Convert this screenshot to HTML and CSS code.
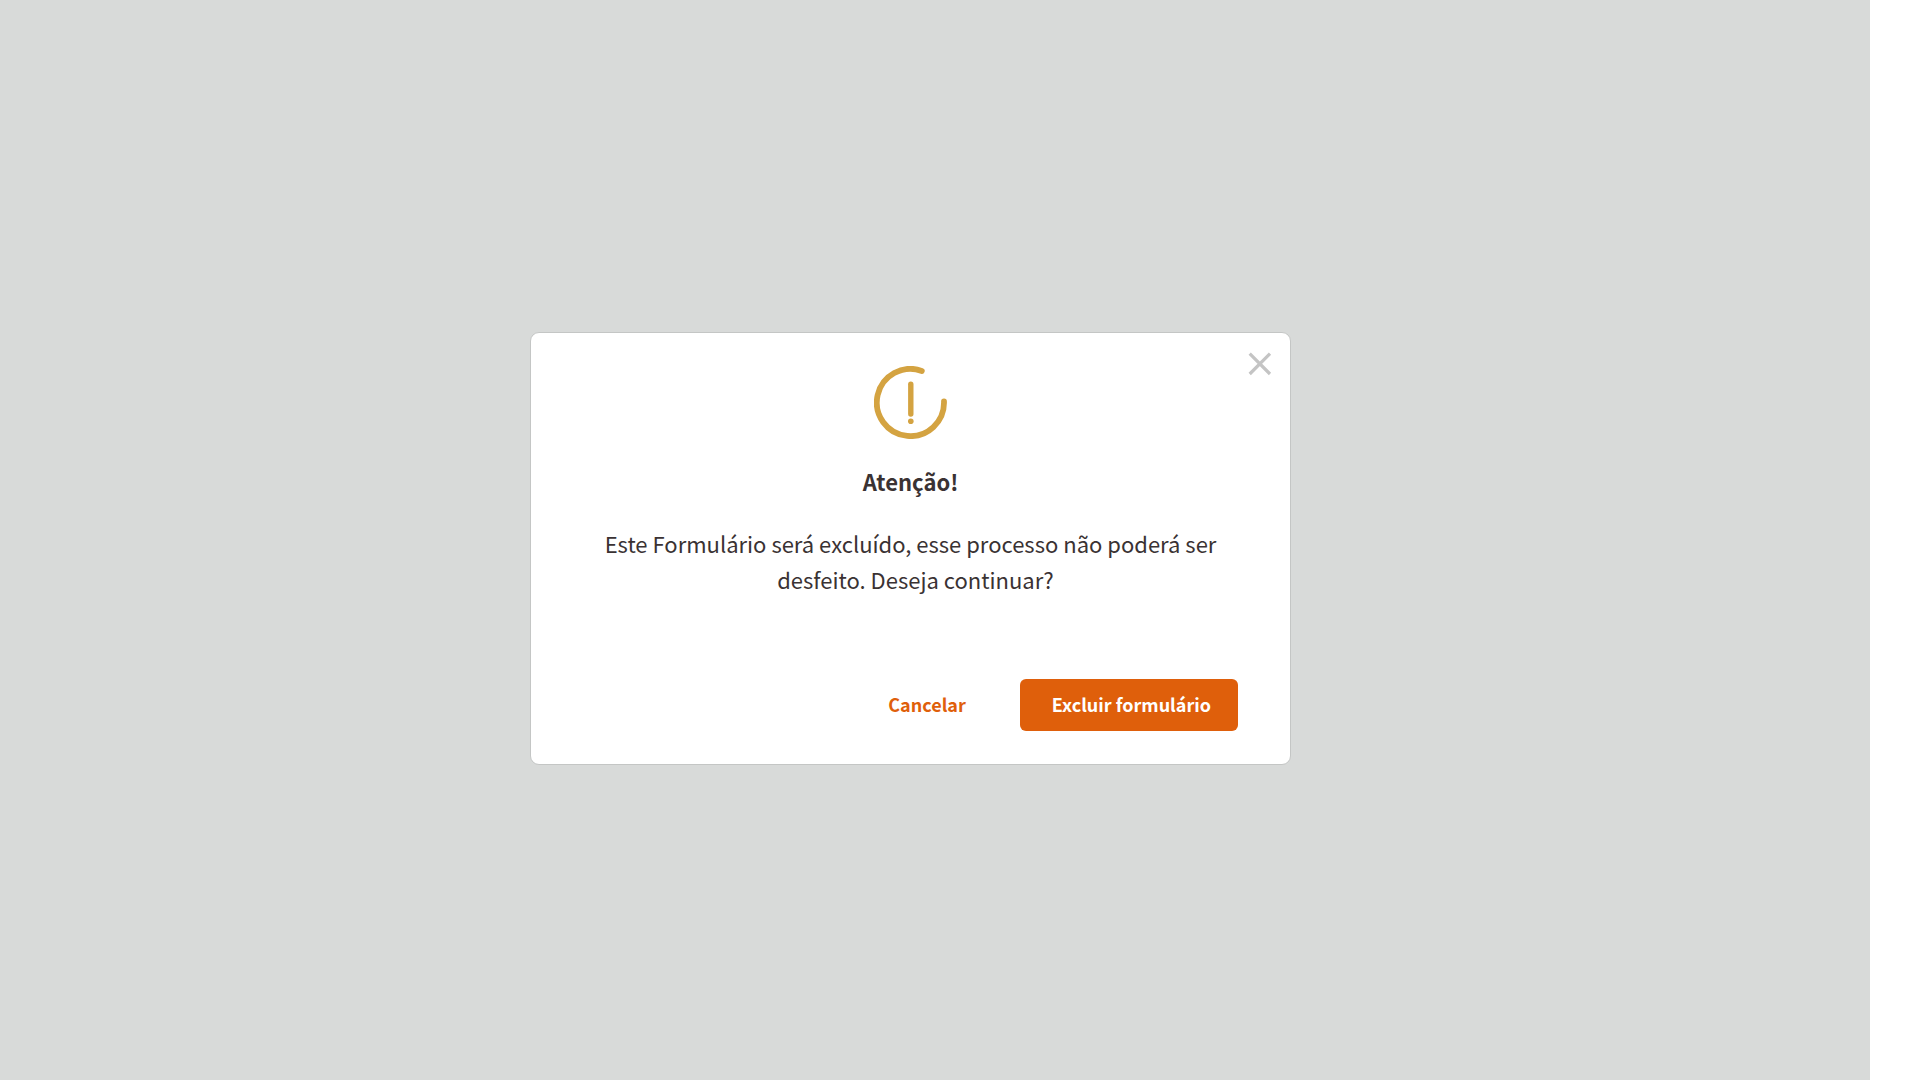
FILE: index.html
```html
<!DOCTYPE html>
<html lang="pt-BR">
<head>
<meta charset="utf-8">
<meta name="viewport" content="width=device-width, initial-scale=1">
<title>Excluir formulário</title>
<link rel="stylesheet" href="styles.css">
</head>
<body>
<main class="overlay">
  <section class="dialog" role="alertdialog" aria-modal="true" aria-labelledby="dialog-title" aria-describedby="dialog-text">
    <button class="close" type="button" aria-label="Fechar">
      <svg width="24" height="24" viewBox="0 0 24 24" aria-hidden="true"><path d="M1.7 1.7 22 22M22 1.7 1.7 22" stroke="currentColor" stroke-width="3.2" fill="none"/></svg>
    </button>
    <svg class="alert-icon" width="73" height="73" viewBox="0 0 73 73" aria-hidden="true">
      <g fill="none" stroke="currentColor" stroke-linecap="round">
        <path d="M47.8 4.9A33.6 33.6 0 1 0 70 35.5" stroke-width="5.8"/>
        <path d="M36.8 18.2V48" stroke-width="5.4"/>
      </g>
      <circle cx="36.8" cy="55.2" r="2.8" fill="currentColor"/>
    </svg>
    <h1 class="title" id="dialog-title">Atenção!</h1>
    <p class="text" id="dialog-text">Este Formulário será excluído, esse processo não poderá ser<br>&nbsp;&nbsp;desfeito. Deseja continuar?</p>
    <div class="actions">
      <button class="button button-text" type="button">Cancelar</button>
      <button class="button button-primary" type="button">Excluir formulário</button>
    </div>
  </section>
</main>
</body>
</html>
```
FILE: styles.css
```css
* {
  box-sizing: border-box;
}

body {
  margin: 0;
  background: #fff;
  color: #3a3233;
  font-family: "Noto Sans CJK SC", "Noto Sans", sans-serif;
}

.overlay {
  display: flex;
  align-items: center;
  justify-content: center;
  min-height: 100vh;
  margin-right: 50px;
  padding: 17px 49px 0 0;
  background: #d8dad9;
}

.dialog {
  position: relative;
  display: flex;
  flex-direction: column;
  align-items: center;
  width: 100%;
  max-width: 761px;
  padding: 33px 52px;
  border: 1px solid #c4c6c5;
  border-radius: 9px;
  background: #fff;
}

.close {
  position: absolute;
  top: 19px;
  right: 18px;
  padding: 0;
  border: 0;
  background: none;
  color: #c4c4c4;
  cursor: pointer;
}

.close svg {
  display: block;
}

.alert-icon {
  color: #d4a341;
}

.title {
  margin: 24px 0 0;
  font-size: 22px;
  font-weight: 700;
  line-height: 36px;
}

.text {
  margin: 26px 0 0;
  font-size: 22px;
  line-height: 36px;
  text-align: center;
}

.actions {
  display: flex;
  align-self: stretch;
  justify-content: flex-end;
  gap: 27px;
  margin-top: 82px;
}

.button {
  height: 52px;
  padding: 0 27px 2px 32px;
  border: 0;
  border-radius: 6px;
  font: 700 18px/26px "Noto Sans CJK SC", "Noto Sans", sans-serif;
  cursor: pointer;
}

.button-text {
  background: none;
  color: #df5f0b;
}

.button-primary {
  background: #df5f0b;
  color: #fff;
}
```
